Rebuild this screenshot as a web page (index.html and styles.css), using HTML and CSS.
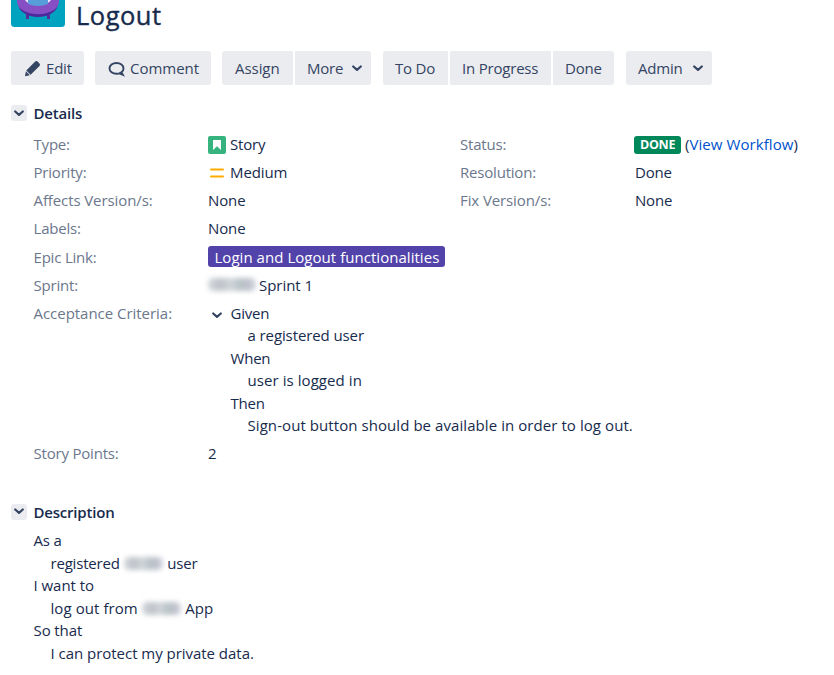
FILE: index.html
```
<!DOCTYPE html>
<html lang="en">
<head>
<meta charset="utf-8">
<title>Logout</title>
<link rel="stylesheet" href="styles.css">
</head>
<body>
<header class="issue-header">
  <svg class="avatar" width="54" height="54" viewBox="0 0 54 54">
    <rect width="54" height="54" rx="3.5" fill="#00a3bf"/>
    <path d="M15 38h3v8h-3zM36 38h3v8h-3z" fill="#5b2ca0"/>
    <ellipse cx="27" cy="30.500" rx="20" ry="13.500" fill="#4c2a9c"/>
    <ellipse cx="27" cy="28.500" rx="21" ry="12.800" fill="#8650c4"/>
    <path d="M14 20h26v7q-3 5-13 5t-13-5z" fill="#eae6ff"/>
    <path d="M17 20h20v11q-10 4-20 0z" fill="#579dd9"/>
  </svg>
  <h1>Logout</h1>
</header>
<nav class="toolbar">
  <div class="group"><button class="btn edit">
    <svg width="17" height="17" viewBox="0 0 17 17"><path d="M1 16.300l.9-5 4 3.900zM2.300 10.600 10.200 2.600l1-1q1.200-1.100 2.400 0l1.900 1.900q1.100 1.200 0 2.400l-1 1L6.600 14.800z" fill="#344563"/></svg><span>Edit</span></button></div>
  <div class="group"><button class="btn comment">
    <svg width="17" height="17" viewBox="0 0 17 17"><path d="M12.600 12.700C11.500 13.400 10.100 13.800 8.500 13.800 4.600 13.800 1.500 11.400 1.500 8.400S4.600 3 8.500 3s7 2.400 7 5.400c0 1.500-.8 2.900-2.100 3.900l1.400 2.500-3.300-1.500" fill="none" stroke="#344563" stroke-width="1.900"/></svg><span>Comment</span></button></div>
  <div class="group"><button class="btn assign"><span>Assign</span></button><button class="btn more"><span>More</span><svg class="chev" width="10" height="7" viewBox="0 0 10 7"><path d="M1.200 1.500 5 4.800l3.800-3.300"/></svg></button></div>
  <div class="group"><button class="btn todo"><span>To Do</span></button><button class="btn progress"><span>In Progress</span></button><button class="btn done"><span>Done</span></button></div>
  <div class="group"><button class="btn admin"><span>Admin</span><svg class="chev" width="10" height="7" viewBox="0 0 10 7"><path d="M1.200 1.500 5 4.800l3.800-3.300"/></svg></button></div>
</nav>
<section>
  <h2><i class="toggle"><svg class="chev" width="10" height="7" viewBox="0 0 10 7"><path d="M1.200 1.500 5 4.800l3.800-3.300"/></svg></i><span>Details</span></h2>
  <div class="columns">
    <dl class="fields">
      <dt>Type:</dt><dd><svg class="ico" width="18" height="18" viewBox="0 0 18 18"><rect width="18" height="18" rx="2" fill="#36b37e"/><path d="M5 4h8v10l-4-3.800L5 14z" fill="#fff"/></svg><span>Story</span></dd>
      <dt>Priority:</dt><dd><svg class="ico" width="18" height="18" viewBox="0 0 18 18"><path d="M3 5.500h12M3 12.500h12" stroke="#ffab00" stroke-width="2" stroke-linecap="round"/></svg><span class="loose">Medium</span></dd>
      <dt class="loose">Affects Version/s:</dt><dd><span class="loose">None</span></dd>
      <dt>Labels:</dt><dd><span class="loose">None</span></dd>
      <dt>Epic Link:</dt><dd><span class="epic">Login and Logout functionalities</span></dd>
      <dt>Sprint:</dt><dd><span class="redacted wide"><b></b></span><span class="looser">Sprint 1</span></dd>
      <dt class="looser">Acceptance Criteria:</dt><dd class="criteria"><svg class="chev" width="10" height="7" viewBox="0 0 10 7"><path d="M1.200 1.500 5 4.800l3.800-3.300"/></svg>
        <div class="story"><p>Given</p><p class="in loose">a registered user</p><p>When</p><p class="in loosest">user is logged in</p><p>Then</p><p class="in loosest">Sign-out button should be available in order to log out.</p></div></dd>
      <dt>Story Points:</dt><dd>2</dd>
    </dl>
    <dl class="fields status">
      <dt>Status:</dt><dd><span class="lozenge">DONE</span><span class="loosest">(<a>View Workflow</a>)</span></dd>
      <dt>Resolution:</dt><dd><span class="indent">Done</span></dd>
      <dt class="loose">Fix Version/s:</dt><dd><span class="indent">None</span></dd>
    </dl>
  </div>
</section>
<section class="description">
  <h2><i class="toggle"><svg class="chev" width="10" height="7" viewBox="0 0 10 7"><path d="M1.200 1.500 5 4.800l3.800-3.300"/></svg></i><span>Description</span></h2>
  <div class="story"><p>As a</p><p class="in"><span>registered</span><span class="redacted"><b></b></span><span class="loose">user</span></p><p class="looser">I want to</p><p class="in"><span class="loosest">log out from</span><span class="redacted"><b></b></span><span class="loosest">App</span></p><p class="loose">So that</p><p class="in looser">I can protect my private data.</p></div>
</section>
</body>
</html>
```
FILE: styles.css
```
* { box-sizing: border-box; }
body { margin: 0; padding: 0 11px; background: #fff; color: #172b4d; font: 15px/22.5px "Open Sans", "Noto Sans", sans-serif; letter-spacing: -0.2px; }
h1, h2, p, dl, dd { margin: 0; }
svg { flex: none; }
.loose { letter-spacing: -0.1px; }
.looser { letter-spacing: -0.03px; }
.loosest { letter-spacing: 0.07px; }
.issue-header { display: flex; height: 51px; align-items: flex-start; gap: 11px; }
.avatar { margin-top: -27px; }
h1 { font-size: 25.5px; line-height: 31px; font-weight: 400; letter-spacing: 0.5px; -webkit-text-stroke: 0.35px #172b4d; }
.toolbar { display: flex; height: 34px; }
.group { display: flex; gap: 2px; margin-right: 11px; }
.group:nth-child(3), .group:nth-child(4) { margin-right: 12px; }
.btn { display: flex; align-items: center; border: 0; padding: 0 0 0 12px; height: 34px; background: #ebecf0; color: #344563; font: inherit; letter-spacing: -0.2px; white-space: nowrap; }
.btn:first-child { border-radius: 3px 0 0 3px; }
.btn:last-child { border-radius: 0 3px 3px 0; }
.btn:only-child { border-radius: 3px; }
.btn.edit { gap: 5px; padding-left: 13px; width: 73px; }
.btn.comment { gap: 5px; padding-left: 13px; width: 116px; letter-spacing: -0.03px; }
.btn.assign { width: 71px; padding-left: 13px; letter-spacing: -0.05px; }
.more { width: 76px; }
.todo { width: 65px; }
.progress { width: 101px; }
.done { width: 61px; }
.admin { width: 86px; }
.btn .chev { margin-left: auto; margin-right: 9.5px; }
.chev path { fill: none; stroke: #344563; stroke-width: 2.2; stroke-linecap: round; stroke-linejoin: round; }
h2 { display: flex; align-items: center; gap: 6.5px; height: 22px; margin-top: 17px; font-size: 15px; font-weight: 600; }
.toggle { display: flex; width: 16px; height: 16px; align-items: center; justify-content: center; background: #ebecf0; border-radius: 3px; }
.columns { display: flex; margin: 9px 0 0 22.5px; }
.fields { display: grid; grid-template-columns: 174.5px 252px; row-gap: 5.65px; align-content: start; white-space: nowrap; }
.status { grid-template-columns: 174px auto; }
dt { color: #6b778c; }
dd { display: flex; align-items: center; min-height: 22.5px; }
.indent { margin-left: 1px; }
.ico { margin: 1px 4px 0 0; }
.epic { height: 21px; line-height: 22.5px; padding: 0 6px 0 6.5px; border-radius: 3px; background: #5243aa; color: #fff; margin-top: -1px; letter-spacing: 0.04px; }
.lozenge { width: 47px; height: 18px; margin: 1.5px 4px 0 0; padding: 0 6px; border-radius: 3px; background: #00875a; color: #fff; font-size: 12.5px; line-height: 18px; font-weight: 700; letter-spacing: -0.3px; }
a { color: #0052cc; }
.criteria { align-items: flex-start; }
.criteria .chev { margin: 10.5px 8.5px 0 4px; }
.in { display: flex; padding-left: 17px; }
.redacted { display: flex; align-items: center; width: 39px; margin: 0 4.5px 0 4px; height: 22.5px; }
.redacted b { width: 100%; height: 13px; border-radius: 5px; filter: blur(2.5px); background: linear-gradient(90deg, #d5d8dc, #bec2c8 25%, #d2d6da 48%, #b9c4c7 64%, #bfc1cc 85%, #d6d9e4); }
.wide { width: 48px; margin: 0 3px 0 0; }
.description { margin-top: 36px; }
.description .story { margin: 6.4px 0 0 22.5px; white-space: nowrap; }
```
